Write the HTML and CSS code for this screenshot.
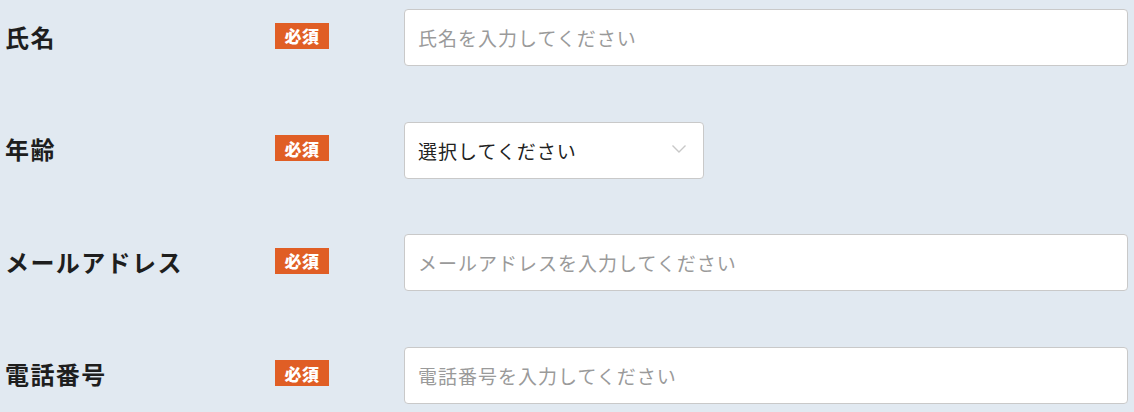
FILE: index.html
```html
<!DOCTYPE html>
<html lang="ja">
<head>
<meta charset="utf-8">
<link rel="stylesheet" href="styles.css">
</head>
<body>
<form class="form">
  <div class="row">
    <div class="label">氏名</div>
    <span class="badge">必須</span>
    <div class="field"><input class="input" type="text" placeholder="氏名を入力してください"></div>
  </div>
  <div class="row">
    <div class="label">年齢</div>
    <span class="badge">必須</span>
    <div class="field">
      <div class="select">
        <span class="select-text">選択してください</span>
        <svg class="chev" width="16" height="10" viewBox="0 0 16 10"><path d="M1.5 1.5 L8 8 L14.5 1.5" fill="none" stroke="#c8c8c8" stroke-width="1.4"/></svg>
      </div>
    </div>
  </div>
  <div class="row">
    <div class="label">メールアドレス</div>
    <span class="badge">必須</span>
    <div class="field"><input class="input" type="text" placeholder="メールアドレスを入力してください"></div>
  </div>
  <div class="row">
    <div class="label">電話番号</div>
    <span class="badge">必須</span>
    <div class="field"><input class="input" type="text" placeholder="電話番号を入力してください"></div>
  </div>
</form>
</body>
</html>
```

FILE: styles.css
```css
html, body {
  margin: 0;
  padding: 0;
  background: #e1e9f1;
  font-family: "Noto Sans CJK JP", "Noto Sans", sans-serif;
}
.form {
  padding: 9px 6px 0 5px;
  display: flex;
  flex-direction: column;
  gap: 55.6px;
}
.row {
  display: flex;
  align-items: center;
  height: 57px;
}
.label {
  width: 270px;
  font-size: 24px;
  font-weight: bold;
  color: #1e1e1e;
  line-height: 1;
  letter-spacing: 1.4px;
  margin-top: -2px;
}
.badge {
  width: 54px;
  height: 26px;
  background: #e05e25;
  color: #fff;
  font-size: 17px;
  font-weight: 900;
  line-height: 1;
  display: flex;
  align-items: center;
  justify-content: center;
  margin-top: -4px;
  letter-spacing: 0.5px;
}
.field {
  margin-left: 75px;
  flex: 1;
  display: flex;
}
.input {
  flex: 1;
  height: 57px;
  box-sizing: border-box;
  border: 1px solid #c9c9c9;
  border-radius: 4px;
  background: #fff;
  padding: 0 13px;
  font-family: inherit;
  font-size: 19px;
  letter-spacing: 1px;
  color: #333;
  outline: none;
}
.input::placeholder {
  color: #9a9a9a;
}
.select {
  width: 300px;
  height: 57px;
  box-sizing: border-box;
  border: 1px solid #c9c9c9;
  border-radius: 4px;
  background: #fff;
  display: flex;
  align-items: center;
  justify-content: space-between;
  padding: 0 16px 0 13px;
}
.select-text {
  font-size: 19px;
  letter-spacing: 1px;
  color: #222;
}
.chev {
  display: block;
  margin-top: -2px;
}
```
